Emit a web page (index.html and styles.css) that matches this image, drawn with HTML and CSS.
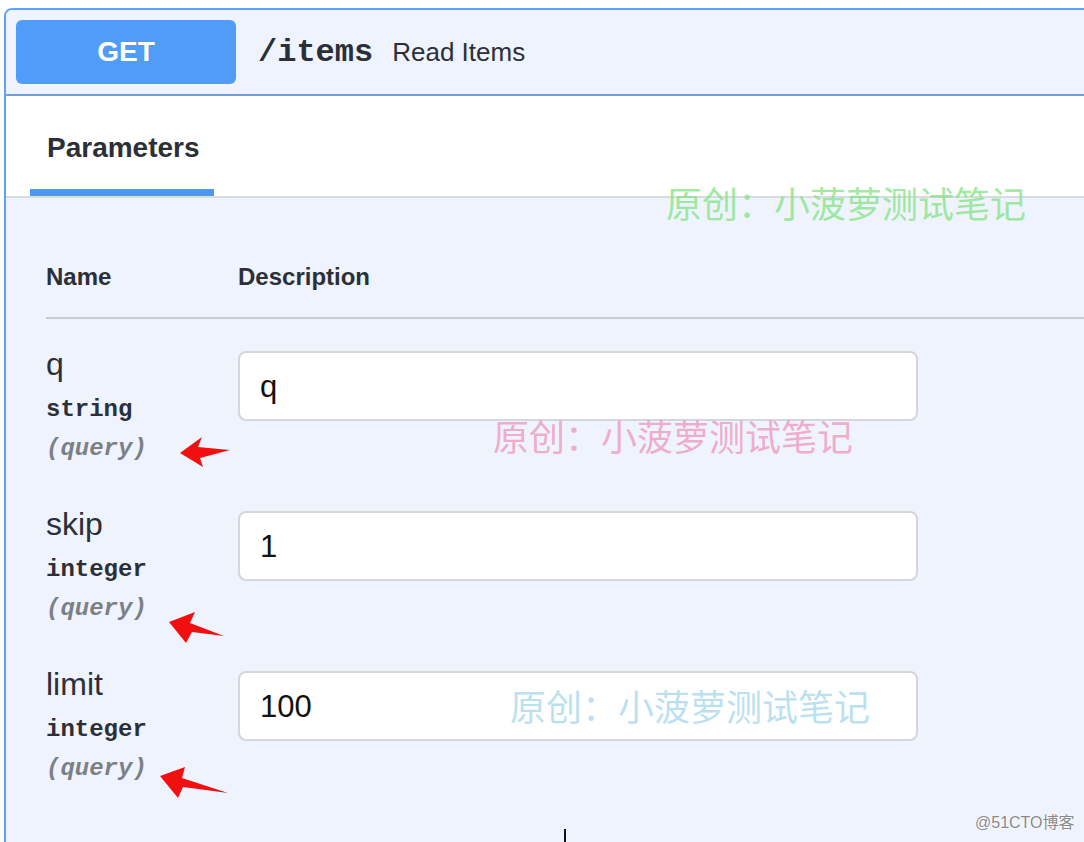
FILE: index.html
```html
<!DOCTYPE html>
<html lang="zh">
<head>
<meta charset="utf-8">
<title>Read Items</title>
<link rel="stylesheet" href="styles.css">
</head>
<body>
<div class="opblock">
  <div class="summary">
    <span class="method">GET</span>
    <span class="path">/items</span>
    <span class="desc">Read Items</span>
  </div>
  <div class="tabs">
    <div class="tab">Parameters</div>
  </div>
  <div class="params">
    <div class="thead">
      <div>Name</div>
      <div>Description</div>
    </div>
    <div class="row">
      <div class="pcol">
        <div class="pname">q</div>
        <div class="ptype">string</div>
        <div class="pin">(query)</div>
      </div>
      <div class="icol"><input class="field" type="text" value="q"></div>
    </div>
    <div class="row">
      <div class="pcol">
        <div class="pname">skip</div>
        <div class="ptype">integer</div>
        <div class="pin">(query)</div>
      </div>
      <div class="icol"><input class="field" type="text" value="1"></div>
    </div>
    <div class="row">
      <div class="pcol">
        <div class="pname">limit</div>
        <div class="ptype">integer</div>
        <div class="pin">(query)</div>
      </div>
      <div class="icol"><input class="field" type="text" value="100"></div>
    </div>
  </div>
</div>

<span class="wm wm-green">原创：小菠萝测试笔记</span>
<span class="wm wm-pink">原创：小菠萝测试笔记</span>
<span class="wm wm-blue">原创：小菠萝测试笔记</span>

<svg class="arrows" width="1084" height="842" viewBox="0 0 1084 842">
  <polygon fill="#f20f0f" points="180,453 202,437 198,447 230,450 200,458 203,467"/>
  <polygon fill="#f20f0f" points="169,622 195,612 190,623 224,636 192,632 186,643"/>
  <polygon fill="#f20f0f" points="160,776 185,767 182,778 228,793 183,787 178,798"/>
</svg>

<span class="cursor"></span>
<span class="credit">@51CTO博客</span>
</body>
</html>
```
FILE: styles.css
```css
html, body {
  margin: 0;
  padding: 0;
}
body {
  position: relative;
  width: 1084px;
  height: 842px;
  overflow: hidden;
  background: #ffffff;
  font-family: "Liberation Sans", Arial, sans-serif;
  color: #3b4151;
}

.opblock {
  margin: 8px 0 0 4px;
  width: 1130px;
  height: 900px;
  border: 2px solid #62a3ef;
  border-radius: 8px;
  background: #eef3fe;
  box-sizing: border-box;
  overflow: hidden;
}

.summary {
  display: flex;
  align-items: center;
  padding: 10px;
  background: #eef3fe;
  border-bottom: 2px solid #62a3ef;
}
.method {
  display: flex;
  align-items: center;
  justify-content: center;
  width: 220px;
  height: 64px;
  border-radius: 6px;
  background: #519cf9;
  color: #ffffff;
  font-size: 28px;
  font-weight: bold;
}
.path {
  margin-left: 22px;
  font-family: "Liberation Mono", "Courier New", monospace;
  font-weight: bold;
  font-size: 32px;
  color: #2b2f38;
}
.desc {
  margin-left: 19px;
  font-size: 26px;
  color: #2b2f38;
}

.tabs {
  display: flex;
  align-items: flex-end;
  height: 100px;
  padding-left: 24px;
  background: #ffffff;
  border-bottom: 2px solid #d7dbe2;
}
.tab {
  width: 167px;
  padding: 36px 0 25px 17px;
  line-height: 32px;
  font-size: 28px;
  font-weight: bold;
  color: #2b2f38;
  border-bottom: 7px solid #4f97f5;
}

.params {
  padding-left: 40px;
  background: #eef3fe;
}
.thead {
  display: grid;
  grid-template-columns: 192px 1fr;
  padding: 65px 0 26px;
  border-bottom: 2px solid #c8ccd3;
  font-size: 24px;
  line-height: 28px;
  font-weight: bold;
  color: #2b2f38;
}

.row {
  display: grid;
  grid-template-columns: 192px 680px;
  height: 160px;
}
.pcol {
  padding-top: 27px;
}
.pname {
  font-size: 32px;
  line-height: 36px;
  color: #2b2f38;
}
.ptype {
  margin-top: 15px;
  font-family: "Liberation Mono", "Courier New", monospace;
  font-weight: bold;
  font-size: 24px;
  line-height: 26px;
  color: #2b2f38;
}
.pin {
  margin-top: 13px;
  font-family: "Liberation Mono", "Courier New", monospace;
  font-weight: bold;
  font-style: italic;
  font-size: 24px;
  line-height: 26px;
  color: #7b7f86;
}
.icol {
  padding-top: 32px;
}
.field {
  display: block;
  box-sizing: border-box;
  width: 680px;
  height: 70px;
  margin: 0;
  padding: 2px 0 0 20px;
  border: 2px solid #d3d6db;
  border-radius: 8px;
  background: #ffffff;
  font-family: "Liberation Sans", Arial, sans-serif;
  font-size: 31px;
  color: #111111;
  outline: none;
}

.wm {
  position: absolute;
  font-family: "Noto Sans CJK SC", sans-serif;
  font-size: 36px;
  line-height: 36px;
  white-space: nowrap;
  pointer-events: none;
}
.wm-green {
  left: 666px;
  top: 184px;
  color: rgba(130, 228, 130, 0.75);
}
.wm-pink {
  left: 493px;
  top: 417px;
  color: rgba(238, 150, 185, 0.75);
}
.wm-blue {
  left: 510px;
  top: 687px;
  color: rgba(165, 215, 235, 0.75);
}

.arrows {
  position: absolute;
  left: 0;
  top: 0;
  pointer-events: none;
}

.cursor {
  position: absolute;
  left: 564px;
  top: 829px;
  width: 2px;
  height: 14px;
  background: #111111;
}

.credit {
  position: absolute;
  left: 975px;
  top: 813px;
  font-family: "Liberation Sans", "Noto Sans CJK SC", sans-serif;
  font-size: 16px;
  line-height: 20px;
  color: #8a8a8a;
  text-shadow: 0 0 2px #ffffff, 0 0 2px #ffffff;
}
```
